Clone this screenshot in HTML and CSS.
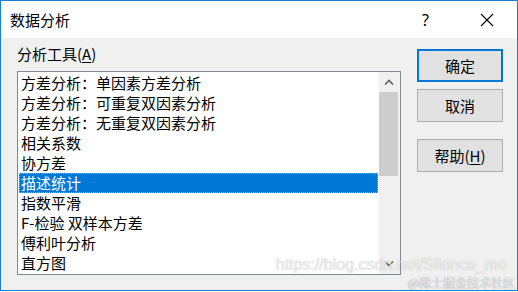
FILE: index.html
```html
<!DOCTYPE html>
<html lang="zh">
<head>
<meta charset="utf-8">
<title>数据分析</title>
<link rel="stylesheet" href="styles.css">
</head>
<body>
<div class="window">
  <div class="titlebar">
    <span class="title">数据分析</span>
    <span class="help-q">?</span>
    <span class="close">
      <svg width="14" height="14" viewBox="0 0 14 14"><path d="M1 1 L13 13 M13 1 L1 13" stroke="#000" stroke-width="1.1" fill="none"/></svg>
    </span>
  </div>
  <div class="content">
    <div class="left">
      <div class="label">分析工具(<u>A</u>)</div>
      <div class="listbox">
        <ul class="items">
          <li>方差分析：单因素方差分析</li>
          <li>方差分析：可重复双因素分析</li>
          <li>方差分析：无重复双因素分析</li>
          <li>相关系数</li>
          <li>协方差</li>
          <li class="selected">描述统计</li>
          <li>指数平滑</li>
          <li>F-检验 双样本方差</li>
          <li>傅利叶分析</li>
          <li>直方图</li>
        </ul>
        <div class="scrollbar">
          <div class="arrow">
            <svg width="10" height="6" viewBox="0 0 10 6"><path d="M1 5.5 L5 1.5 L9 5.5" stroke="#606060" stroke-width="1.6" fill="none"/></svg>
          </div>
          <div class="thumb"></div>
          <div class="track"></div>
          <div class="arrow">
            <svg width="10" height="6" viewBox="0 0 10 6"><path d="M1 0.5 L5 4.5 L9 0.5" stroke="#606060" stroke-width="1.6" fill="none"/></svg>
          </div>
        </div>
      </div>
    </div>
    <div class="right">
      <button class="btn default">确定</button>
      <button class="btn">取消</button>
      <button class="btn help">帮助(<u>H</u>)</button>
    </div>
    <div class="watermark">
      <div class="wm-url">https://blog.csdn.net/Slience_me</div>
      <div class="wm-site">@稀土掘金技术社区</div>
    </div>
  </div>
</div>
</body>
</html>
```
FILE: styles.css
```css
* { box-sizing: border-box; }
html, body { margin: 0; padding: 0; }
body {
  width: 518px;
  height: 292px;
  font-family: "Noto Sans CJK SC", "Noto Sans", sans-serif;
  font-size: 15px;
  color: #000;
  overflow: hidden;
}
.window {
  width: 518px;
  height: 291px;
  border: 1px solid #1a7fd4;
  display: flex;
  flex-direction: column;
  background: #f0f0f0;
}
.titlebar {
  height: 37px;
  background: #fff;
  display: flex;
  align-items: center;
  padding-left: 9px;
  flex-shrink: 0;
}
.title { flex: 1; line-height: 20px; }
.help-q {
  width: 12px;
  margin-right: 46px;
  font-family: "Noto Sans", sans-serif;
  font-size: 16px;
  line-height: 20px;
}
.close {
  width: 14px;
  height: 14px;
  margin-right: 23px;
  display: flex;
}
.content {
  flex: 1;
  position: relative;
  display: flex;
  padding: 6px 0 0 16px;
  gap: 16px;
}
.left { display: flex; flex-direction: column; }
.label {
  line-height: 20px;
  height: 20px;
  margin-bottom: 7px;
}
.label u, .help u { text-underline-offset: 2px; }
.listbox {
  width: 384px;
  height: 204px;
  border: 1px solid #828790;
  background: #fff;
  display: flex;
}
.items {
  list-style: none;
  margin: 0;
  padding: 1px 0 0 1px;
  width: 361px;
}
.items li {
  height: 20px;
  line-height: 20px;
  width: 359px;
  padding-left: 2px;
  white-space: nowrap;
}
.items li.selected {
  background: #0078d7;
  color: #fff;
  outline: 1px dotted #f0a040;
  outline-offset: -1px;
}
.scrollbar {
  width: 21px;
  background: #f0f0f0;
  display: flex;
  flex-direction: column;
}
.arrow {
  height: 20px;
  display: flex;
  align-items: center;
  justify-content: center;
  padding-right: 2px;
}
.thumb {
  height: 84px;
  width: 19px;
  background: #cdcdcd;
}
.track { flex: 1; }
.right {
  display: flex;
  flex-direction: column;
  gap: 7px;
  padding-top: 5px;
}
.btn {
  width: 86px;
  height: 33px;
  background: #e1e1e1;
  border: 1px solid #adadad;
  font-family: "Noto Sans CJK SC", "Noto Sans", sans-serif;
  font-size: 15px;
  color: #000;
  padding: 0;
  margin: 0;
}
.btn.default { border: 2px solid #0078d7; }
.btn.help { margin-top: 10px; }
.watermark {
  position: absolute;
  right: 2px;
  bottom: 1px;
  text-align: right;
  pointer-events: none;
}
.wm-url {
  font-family: "Liberation Sans", sans-serif;
  font-size: 16px;
  line-height: 16px;
  color: rgba(255,255,255,0.75);
  text-shadow: 0 0 1px rgba(120,120,120,0.6);
  margin-right: 8px;
}
.wm-site {
  font-size: 12px;
  line-height: 12px;
  margin-top: 4px;
  color: rgba(255,255,255,0.85);
  text-shadow: 0 0 1px rgba(80,80,80,0.8);
}
```
